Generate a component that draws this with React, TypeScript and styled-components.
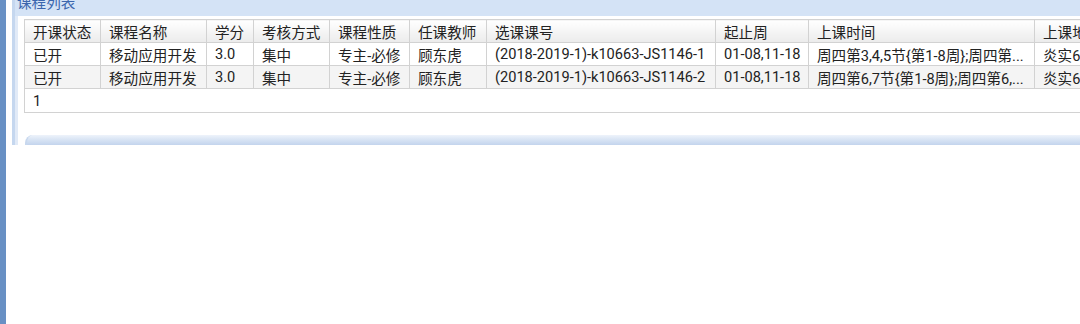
import React from 'react';
import styled, { createGlobalStyle } from 'styled-components';

const GlobalStyle = createGlobalStyle`
  html, body {
    margin: 0;
    padding: 0;
    background: #ffffff;
  }
  body {
    font-family: Roboto, "Noto Sans CJK SC", sans-serif;
    overflow: hidden;
  }
`;

const Page = styled.div`
  display: flex;
  height: 324px;
  width: 1080px;
  overflow: hidden;
  background: #ffffff;
`;

const SideRail = styled.div`
  width: 6px;
  flex-shrink: 0;
  background: #6890c4;
  margin-right: 6px;
`;

const Panel = styled.section`
  flex: 1;
  min-width: 0;
  align-self: flex-start;
  margin-top: -8px;
  border-left: 3px solid #c5d7ef;
  overflow: hidden;
`;

const TitleBar = styled.div`
  height: 24px;
  box-sizing: border-box;
  padding: 3px 0 0 5px;
  margin-left: -3px;
  background: #d4e3f6;
  color: #3b66ae;
  font-size: 14.6px;
  line-height: 16px;
`;

const PanelBody = styled.div`
  border-left: 3px solid #e1eaf7;
  padding: 3px 0 0 6px;
  display: flex;
  flex-direction: column;
`;

const GridTable = styled.table`
  border-collapse: collapse;
  table-layout: fixed;
  width: 1150px;
  font-size: 14.6px;
  color: #222222;
  border: 1px solid #d2d2d2;
`;

const HeadCell = styled.th`
  height: 22px;
  padding: 0 8px;
  text-align: left;
  font-weight: normal;
  border: 1px solid #d2d2d2;
  background: linear-gradient(#ffffff, #ebebeb);
  white-space: nowrap;
  overflow: hidden;
`;

const Row = styled.tr<{ $striped?: boolean }>`
  background: ${({ $striped }) => ($striped ? '#f4f4f4' : '#ffffff')};
`;

const Cell = styled.td`
  height: 22px;
  padding: 0 8px;
  border: 1px solid #d2d2d2;
  white-space: nowrap;
  overflow: hidden;
  text-overflow: clip;
`;

const PagerCell = styled.td`
  height: 23px;
  padding: 0 8px;
  background: #ffffff;
`;

const Spacer = styled.div`
  height: 22px;
`;

const ScrollTrack = styled.div`
  height: 10px;
  margin-left: 1px;
  border-top-left-radius: 8px;
  background: linear-gradient(#eef3fb 0%, #dbe6f5 40%, #c3d4ed 100%);
  border-left: 2px solid #c8d8ee;
`;

const columns = [
  { title: '开课状态', width: 76 },
  { title: '课程名称', width: 106 },
  { title: '学分', width: 47 },
  { title: '考核方式', width: 76 },
  { title: '课程性质', width: 80 },
  { title: '任课教师', width: 77 },
  { title: '选课课号', width: 229 },
  { title: '起止周', width: 93 },
  { title: '上课时间', width: 226 },
  { title: '上课地点', width: 140 },
];

const courses = [
  [
    '已开',
    '移动应用开发',
    '3.0',
    '集中',
    '专主-必修',
    '顾东虎',
    '(2018-2019-1)-k10663-JS1146-1',
    '01-08,11-18',
    '周四第3,4,5节{第1-8周};周四第...',
    '炎实6-301',
  ],
  [
    '已开',
    '移动应用开发',
    '3.0',
    '集中',
    '专主-必修',
    '顾东虎',
    '(2018-2019-1)-k10663-JS1146-2',
    '01-08,11-18',
    '周四第6,7节{第1-8周};周四第6,...',
    '炎实6-301',
  ],
];

export default function App() {
  return (
    <Page>
      <GlobalStyle />
      <SideRail />
      <Panel>
        <TitleBar>课程列表</TitleBar>
        <PanelBody>
          <GridTable>
            <colgroup>
              {columns.map((c) => (
                <col key={c.title} style={{ width: c.width }} />
              ))}
            </colgroup>
            <thead>
              <tr>
                {columns.map((c) => (
                  <HeadCell key={c.title}>{c.title}</HeadCell>
                ))}
              </tr>
            </thead>
            <tbody>
              {courses.map((row, i) => (
                <Row key={row[6]} $striped={i % 2 === 1}>
                  {row.map((value, j) => (
                    <Cell key={j}>{value}</Cell>
                  ))}
                </Row>
              ))}
            </tbody>
            <tfoot>
              <tr>
                <PagerCell colSpan={columns.length}>1</PagerCell>
              </tr>
            </tfoot>
          </GridTable>
          <Spacer />
          <ScrollTrack />
        </PanelBody>
      </Panel>
    </Page>
  );
}
